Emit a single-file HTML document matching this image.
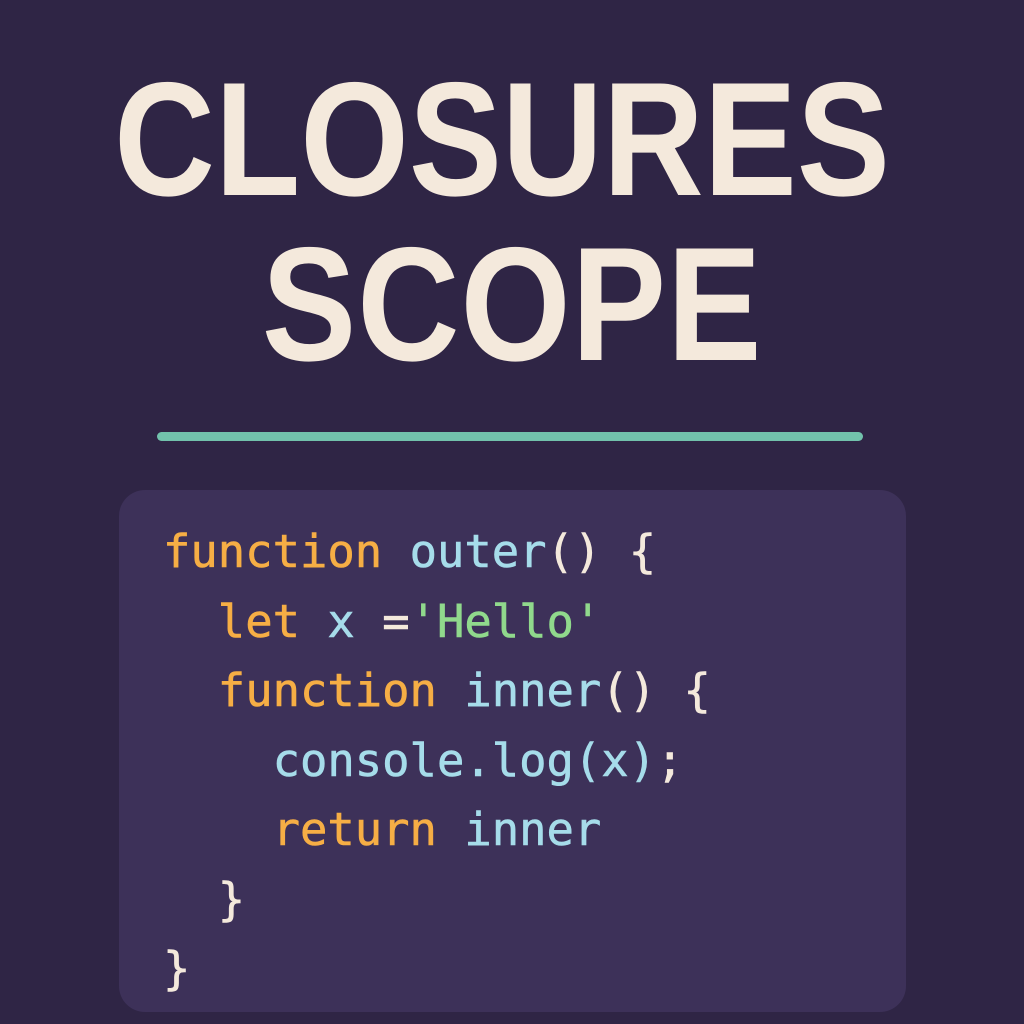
<!DOCTYPE html>
<html><head><meta charset="utf-8"><style>
html,body{margin:0;padding:0}
body{width:1024px;height:1024px;background:#2f2545;position:relative;overflow:hidden;font-family:"Liberation Sans",sans-serif}
.t{position:absolute;left:0;width:1024px;text-align:center;color:#f4e9dc;font-weight:bold;font-size:162px;line-height:1;}
.t span{display:inline-block;transform:scaleX(0.875);transform-origin:center;letter-spacing:1px}
.line{position:absolute;left:157px;top:432px;width:706px;height:9px;border-radius:5px;background:#72c2ac}
.card{position:absolute;left:119px;top:490px;width:787px;height:522px;border-radius:26px;background:#3d3159}
pre{position:absolute;left:163px;top:517px;margin:0;font-family:"DejaVu Sans Mono","Liberation Mono",monospace;font-size:45.5px;line-height:69.5px;color:#f4e9dc;-webkit-text-stroke:0.6px currentColor}
.k{color:#f6ae45}.f{color:#a6dcea}.s{color:#90d98c}
</style></head><body>
<div class="t" style="top:59px;left:-10px"><span style="transform:scaleX(0.862);letter-spacing:0">CLOSURES</span></div>
<div class="t" style="top:224px"><span>SCOPE</span></div>
<div class="line"></div>
<div class="card"></div>
<pre><span class="k">function</span> <span class="f">outer</span>() {
  <span class="k">let</span> <span class="f">x</span> =<span class="s">'Hello'</span>
  <span class="k">function</span> <span class="f">inner</span>() {
    <span class="f">console.log(x)</span>;
    <span class="k">return</span> <span class="f">inner</span>
  }
}</pre>
</body></html>
